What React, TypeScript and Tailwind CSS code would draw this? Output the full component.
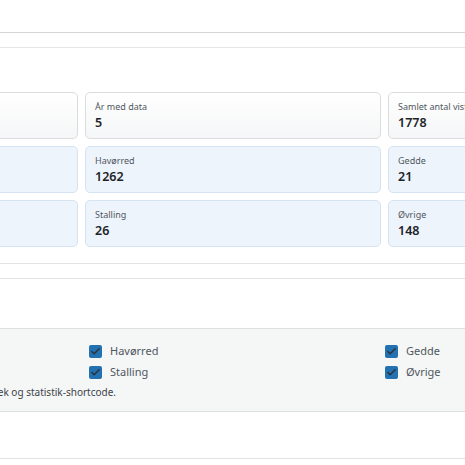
import { Check } from "lucide-react";

type Stat = { label: string; value: string };

const overview: Stat[] = [
  { label: "Fangster i alt", value: "1778" },
  { label: "År med data", value: "5" },
  { label: "Samlet antal viste fangster", value: "1778" },
];

const species: Stat[] = [
  { label: "Laks", value: "321" },
  { label: "Havørred", value: "1262" },
  { label: "Gedde", value: "21" },
  { label: "Regnbueørred", value: "0" },
  { label: "Stalling", value: "26" },
  { label: "Øvrige", value: "148" },
];

function StatCard({ stat, tone }: { stat: Stat; tone: "plain" | "blue" }) {
  return (
    <div
      className={
        tone === "plain"
          ? "h-[47px] rounded-[5px] border border-[#dcdcde] bg-gradient-to-b from-white to-[#f5f6f7] px-[9px] pt-[7px]"
          : "h-[47px] rounded-[5px] border border-[#d6e3f2] bg-[#eef4fb] px-[9px] pt-[7px]"
      }
    >
      <div className="truncate text-[9px] leading-[13px] text-[#50575e]">{stat.label}</div>
      <div className="mt-[1px] text-[12.5px] font-semibold leading-[18px] text-[#1d2327]">{stat.value}</div>
    </div>
  );
}

function SpeciesBox({ label }: { label: string }) {
  return (
    <label className="flex h-[21px] items-center gap-[8px] text-[11px] text-[#50575e]">
      <span className="flex h-[13px] w-[13px] items-center justify-center rounded-[2px] bg-[#2271b1]">
        <Check size={11} strokeWidth={3.2} className="text-[#2c3338]" />
      </span>
      {label}
    </label>
  );
}

export default function App() {
  return (
    <div
      className="h-[465px] w-[465px] overflow-hidden bg-white"
      style={{ fontFamily: '"Noto Sans", "Open Sans", sans-serif' }}
    >
      <div className="ml-[-218px] w-[1000px]">
        <div className="h-[32px]" />
        <div className="h-[16px] border-y border-t-[#d4d4d6] border-b-[#e6e6e6]" />

        <div className="mt-[44px] grid w-[902px] grid-cols-3 gap-x-[7px] gap-y-[7px]">
          {overview.map((s) => (
            <StatCard key={s.label} stat={s} tone="plain" />
          ))}
          {species.map((s) => (
            <StatCard key={s.label} stat={s} tone="blue" />
          ))}
        </div>

        <div className="mt-[16px] h-[16px] border-y border-[#e3e3e3]" />

        <div className="mt-[49px] border-y border-[#dfdfe0] bg-[#f5f6f6] pb-[12px] pt-[12px]">
          <div className="flex pl-[307px]">
            <div className="w-[296px]">
              <SpeciesBox label="Havørred" />
              <SpeciesBox label="Stalling" />
            </div>
            <div>
              <SpeciesBox label="Gedde" />
              <SpeciesBox label="Øvrige" />
            </div>
          </div>
          <div className="mt-[2px] flex w-[334px] justify-end">
            <p className="whitespace-nowrap text-[10px] leading-[14px] text-[#3c434a]">
              Vælg de fiskearter der skal indgå i fangstlisten, diagrammer, sæsontjek og statistik-shortcode.
            </p>
          </div>
        </div>

        <div className="mt-[46px] border-t border-[#e3e3e3]" />
      </div>
    </div>
  );
}
